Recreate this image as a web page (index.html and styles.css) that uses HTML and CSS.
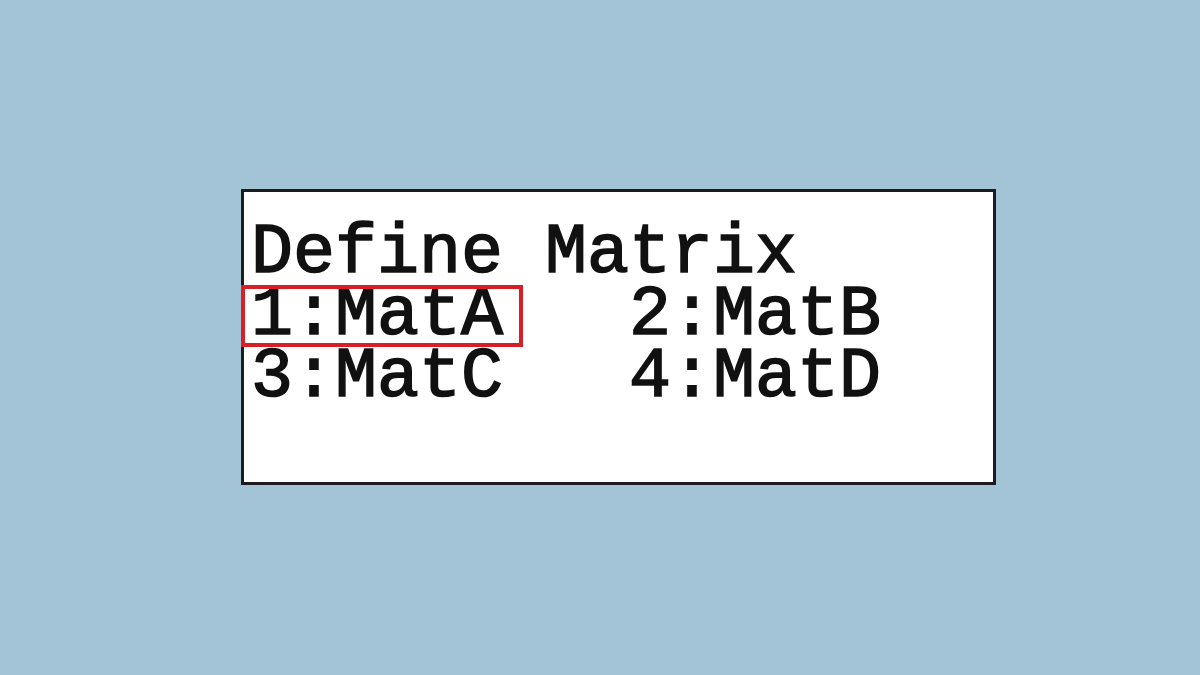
FILE: index.html
```html
<!DOCTYPE html>
<html lang="en">
<head>
    <meta charset="UTF-8">
    <title>Define Matrix</title>
    <link rel="stylesheet" href="styles.css">
</head>
<body>
    <div class="screen">
        <div class="title">Define Matrix</div>
        <div class="menu">
            <span class="opt"><span class="sel">1:MatA</span></span>
            <span class="opt">2:MatB</span>
            <span class="opt">3:MatC</span>
            <span class="opt">4:MatD</span>
        </div>
    </div>
</body>
</html>
```

FILE: styles.css
```css
/*页面背景*/
body {
    margin: 0;
    background: #a3c3d6;
    padding: 189px 0 0 241px;
}

/*计算器屏幕*/
.screen {
    box-sizing: border-box;
    width: 755px;
    height: 296px;
    background: #fff;
    border: 3px solid #1c1c1c;
    padding: 31px 0 0 7px;
    font-family: "Liberation Mono", "DejaVu Sans Mono", monospace;
    font-size: 70px;
    line-height: 62px;
    color: #111;
    /*点阵字比常规字重粗一点*/
    -webkit-text-stroke: 1.6px #111;
}

.title {
    white-space: pre;
}

/*两列菜单，第二列从第10个字符开始*/
.menu {
    display: grid;
    grid-template-columns: 9ch auto;
}

.opt {
    white-space: pre;
}

/*选中项的红框*/
.sel {
    display: inline-block;
    padding: 0 20px 0 10px;
    margin: 0 -20px 0 -10px;
    outline: 4px solid #d91f26;
    outline-offset: -4px;
}
```
